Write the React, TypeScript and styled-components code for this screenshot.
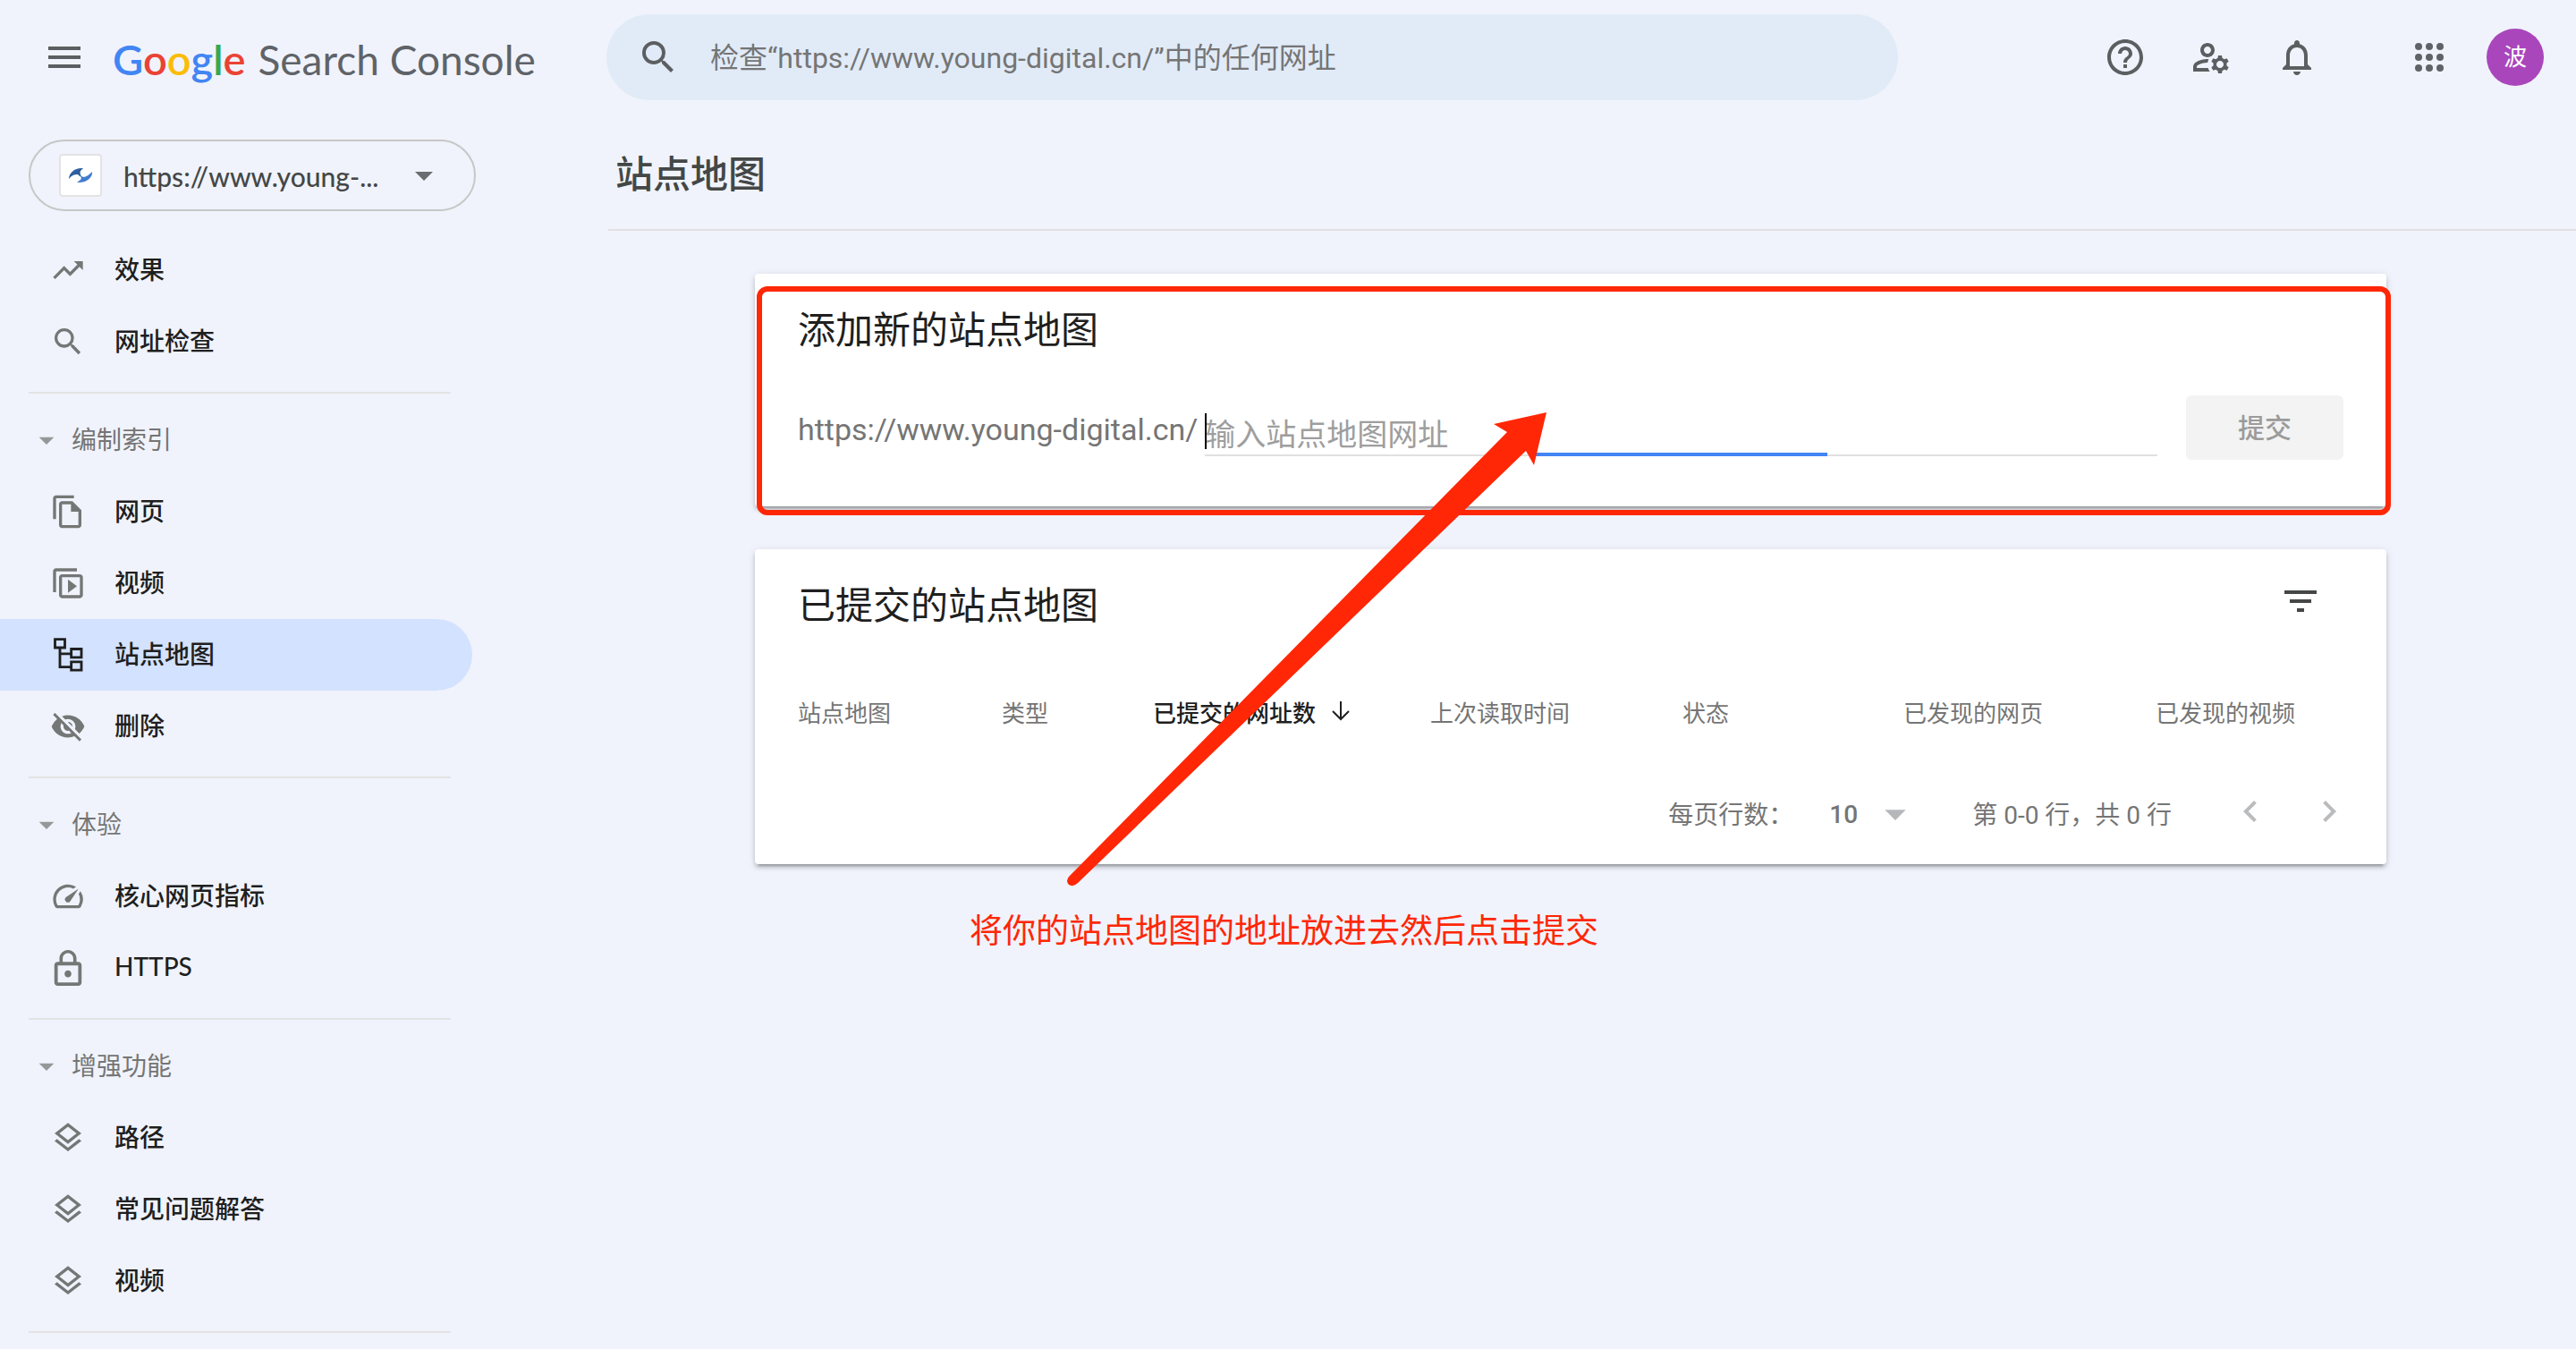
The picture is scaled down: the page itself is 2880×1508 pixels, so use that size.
import React from "react";
import styled, { createGlobalStyle, css } from "styled-components";
import {
  MdTrendingUp,
  MdSearch,
  MdOutlineFileCopy,
  MdSpeed,
  MdLockOutline,
  MdOutlineLayers,
  MdHelpOutline,
  MdOutlineManageAccounts,
  MdNotificationsNone,
  MdFilterList,
  MdArrowDropDown,
  MdChevronLeft,
  MdChevronRight,
  MdMenu,
  MdVisibilityOff,
} from "react-icons/md";

const annotationRed = "#ff2706";
const brandFont = `Lato, "Noto Sans CJK SC", sans-serif`;

const GlobalStyle = createGlobalStyle`
  *, *::before, *::after { box-sizing: border-box; }
  body {
    margin: 0;
    background: #f0f3fb;
    color: #1f1f1f;
    font-family: Roboto, "Noto Sans CJK SC", sans-serif;
    font-size: 28px;
    overflow: hidden;
  }
  button, input, select { font: inherit; color: inherit; }
  svg { display: block; flex: none; }
`;

const Page = styled.div`
  display: grid;
  grid-template-columns: 680px 1fr;
  grid-template-rows: 128px 1fr;
  min-height: 100vh;
`;

const Brand = styled.div`
  display: flex;
  align-items: center;
  padding-left: 48px;
`;

const IconButton = styled.button`
  display: flex;
  align-items: center;
  justify-content: center;
  width: 48px;
  height: 48px;
  padding: 0;
  border: 0;
  background: none;
  color: ${(p) => p.color || "#5c5f61"};
  font-size: 48px;
  cursor: pointer;
`;

const Logo = styled.a`
  display: flex;
  align-items: baseline;
  gap: 14px;
  margin-left: 30px;
  padding-top: 4px;
  font-family: ${brandFont};
  font-size: 46px;
  line-height: 56px;
  color: #5f6368;
  text-decoration: none;
  white-space: nowrap;
`;

const Wordmark = styled.span`
  font-size: 47px;
  font-weight: 600;
`;

const Letter = styled.span<{ $hue: string }>`
  color: ${(p) => p.$hue};
`;

const TopBar = styled.header`
  display: flex;
  align-items: center;
  justify-content: space-between;
  padding-right: 36px;
`;

const SearchBox = styled.label`
  display: flex;
  align-items: center;
  gap: 34px;
  width: 1444px;
  height: 96px;
  margin-left: -2px;
  padding: 0 34px;
  border-radius: 48px;
  background: #e1ebf8;
  color: #5c5f61;
  font-size: 48px;
`;

const SearchInput = styled.input`
  flex: 1;
  min-width: 0;
  padding: 2px 0 0;
  border: 0;
  outline: 0;
  background: none;
  font-size: 32px;
  line-height: 48px;
  &::placeholder { color: #757575; opacity: 1; }
`;

const Actions = styled.div`
  display: flex;
  align-items: center;
  gap: 48px;
`;

const AccountArea = styled.div`
  display: flex;
  align-items: center;
  gap: 40px;
  margin-left: 52px;
`;

const Avatar = styled.button`
  width: 64px;
  height: 64px;
  padding: 0;
  border: 0;
  border-radius: 50%;
  background: #a946bc;
  color: #fff;
  font-size: 26px;
  line-height: 64px;
  text-align: center;
`;

const Sidebar = styled.nav`
  padding-top: 28px;
`;

const PropertyPicker = styled.button`
  display: flex;
  align-items: center;
  width: 500px;
  height: 80px;
  margin: 0 0 26px 32px;
  padding: 0 32px;
  border: 2px solid #c7c7c7;
  border-radius: 40px;
  background: none;
  color: #444746;
  font-family: ${brandFont};
  font-size: 30px;
  font-weight: 500;
`;

const Favicon = styled.span`
  display: flex;
  align-items: center;
  justify-content: center;
  width: 48px;
  height: 48px;
  border: 2px solid #e3e3e3;
  border-radius: 4px;
  background: #fff;
`;

const PropertyName = styled.span`
  flex: 1;
  margin-left: 24px;
  padding-top: 2px;
  text-align: left;
`;

const PropertyCaret = styled.span`
  display: flex;
  color: #6b6e70;
  font-size: 48px;
`;

const NavGroup = styled.div`
  & + & { padding-top: 12px; }
`;

const NavRule = styled.hr`
  width: 472px;
  height: 2px;
  margin: 16px 0 0 32px;
  border: 0;
  background: #e3e3e5;
`;

const GroupToggle = styled.button`
  display: flex;
  align-items: center;
  gap: 8px;
  width: 528px;
  height: 80px;
  padding: 0 0 0 32px;
  border: 0;
  background: none;
  color: #757575;
  font-size: 28px;
  svg { font-size: 40px; color: #959799; }
`;

const NavItem = styled.a<{ $active?: boolean }>`
  display: flex;
  align-items: center;
  gap: 32px;
  width: 528px;
  height: 80px;
  padding-left: 56px;
  border-radius: 0 40px 40px 0;
  color: #1f1f1f;
  font-family: ${brandFont};
  font-size: 28px;
  font-weight: 500;
  text-decoration: none;
  svg { font-size: 40px; color: #747775; }
  ${(p) =>
    p.$active &&
    css`
      background: #d3e2fe;
      svg { color: #1f1f1f; }
    `}
`;

const NavText = styled.span`
  padding-bottom: 4px;
`;

const Main = styled.main`
  min-width: 0;
`;

const PageTitle = styled.h1`
  height: 130px;
  margin: 0;
  padding: 38px 8px 0;
  border-bottom: 2px solid #e1e1e3;
  color: #444746;
  font-size: 42px;
  font-weight: 500;
  line-height: 60px;
`;

const Content = styled.div`
  position: relative;
  display: flex;
  flex-direction: column;
  gap: 48px;
  margin: 48px 212px 0 164px;
`;

const Card = styled.section`
  position: relative;
  padding: 34px 48px 0;
  border-radius: 4px;
  background: #fff;
  box-shadow: 0 6px 2px -4px rgba(0, 0, 0, 0.2), 0 4px 4px rgba(0, 0, 0, 0.14),
    0 2px 10px rgba(0, 0, 0, 0.12);
`;

const CardHead = styled.div`
  display: flex;
  align-items: flex-start;
  justify-content: space-between;
  padding-right: 24px;
`;

const CardTitle = styled.h2`
  margin: 0;
  font-size: 42px;
  font-weight: 400;
  line-height: 60px;
  color: #1f1f1f;
`;

const AddForm = styled.form`
  display: flex;
  align-items: center;
  margin-top: 42px;
  padding-bottom: 52px;
`;

const SitePrefix = styled.label`
  margin-right: 8px;
  padding-top: 4px;
  color: #757575;
  font-size: 34px;
  line-height: 48px;
`;

const Field = styled.div`
  position: relative;
  flex: 1;
  margin-right: 32px;
  border-bottom: 2px solid #e0e0e0;
  &::after {
    content: "";
    position: absolute;
    bottom: -2px;
    left: 50%;
    width: 326px;
    height: 4px;
    margin-left: -163px;
    background: #4285f4;
  }
`;

const FieldInput = styled.input`
  display: block;
  width: 100%;
  height: 62px;
  padding: 18px 0 0;
  border: 0;
  outline: 0;
  background: none;
  font-size: 34px;
  &::placeholder { color: #9e9e9e; opacity: 1; }
`;

const Caret = styled.span`
  position: absolute;
  top: 16px;
  left: 0;
  width: 2px;
  height: 40px;
  background: #000;
`;

const SubmitButton = styled.button`
  width: 176px;
  height: 72px;
  padding: 0 0 4px;
  border: 0;
  border-radius: 6px;
  background: #f3f3f3;
  color: #9b9b9b;
  font-size: 30px;
  font-weight: 500;
`;

const Highlight = styled.div`
  position: absolute;
  inset: 14px -5px -10px 2px;
  border: 6px solid ${annotationRed};
  border-radius: 12px;
  pointer-events: none;
`;

const Table = styled.table`
  width: 100%;
  margin-top: 66px;
  border-collapse: collapse;
  table-layout: fixed;
`;

const HeadCell = styled.th<{ $width: number; $sorted?: boolean }>`
  width: ${(p) => p.$width}px;
  padding: 0;
  color: ${(p) => (p.$sorted ? "#1f1f1f" : "#757575")};
  font-size: 26px;
  font-weight: ${(p) => (p.$sorted ? 500 : 400)};
  line-height: 48px;
  text-align: left;
  white-space: nowrap;
`;

const SortLabel = styled.span`
  display: flex;
  align-items: center;
  gap: 16px;
  svg { margin-bottom: 6px; }
`;

const Pager = styled.div`
  display: flex;
  align-items: center;
  justify-content: flex-end;
  height: 112px;
  margin-top: 32px;
  color: #757575;
  font-size: 28px;
`;

const PageSize = styled.div`
  display: flex;
  align-items: center;
  position: relative;
  margin: 0 64px 0 40px;
  svg { position: absolute; right: -6px; font-size: 56px; color: #b5b7ba; pointer-events: none; }
`;

const SizeSelect = styled.select`
  width: 96px;
  padding: 0;
  border: 0;
  background: none;
  appearance: none;
  font-weight: 500;
`;

const PagerText = styled.span`
  padding-bottom: 2px;
`;

const PagerButtons = styled.div`
  display: flex;
  gap: 40px;
  margin: 0 -8px 6px 64px;
`;

const ArrowMark = styled.svg`
  position: absolute;
  top: 150px;
  left: 340px;
  pointer-events: none;
`;

const Note = styled.p`
  margin: -2px 0 0 240px;
  color: ${annotationRed};
  font-size: 37px;
  line-height: 60px;
`;

const Icon = ({ size = "1em", children }: { size?: string | number; children: React.ReactNode }) => (
  <svg viewBox="0 0 24 24" width={size} height={size} fill="currentColor" aria-hidden="true">
    {children}
  </svg>
);

const VideoIcon = () => (
  <Icon>
    <path d="M4 2h14v2H4v14H2V4c0-1.100.9-2 2-2z" />
    <path d="M20 6H8c-1.100 0-2 .9-2 2v12c0 1.100.9 2 2 2h12c1.100 0 2-.9 2-2V8c0-1.100-.9-2-2-2zm0 14H8V8h12v12z" />
    <path d="M12 9.500v9l6-4.500z" />
  </Icon>
);

const SitemapIcon = () => (
  <Icon>
    <g fill="none" stroke="currentColor" strokeWidth="1.700">
      <path d="M3.300 1.600h6.600v5.600H3.300zM14.200 8.100h6.800v5.600h-6.800zM14.200 16.700h6.800v5.600h-6.800z" />
      <path d="M6.600 7.200v13h7.600M6.600 11.300h7.600" />
    </g>
  </Icon>
);

const AppsIcon = () => (
  <Icon size={48}>
    {[6, 12, 18].map((y) => [6, 12, 18].map((x) => <circle key={`${x}-${y}`} cx={x} cy={y} r="2" />))}
  </Icon>
);

const SwirlIcon = () => (
  <svg viewBox="0 0 26 18" width="26" height="18" aria-hidden="true">
    <path d="M0 13C0 6 7 0 16 1l-3 3c-1 2 0 4 1 7-2-1-3-2-4-3-4 0-7 1-10 5z" fill="#2f5f9e" />
    <path d="M26 5c1 6-6 13-17 12l4-3c1-1 1-3 0-5 1 1 3 2 4 2 4-1 6-3 9-6z" fill="#3f7bd0" />
  </svg>
);

const groups = [
  { title: "", items: [["效果", <MdTrendingUp />], ["网址检查", <MdSearch />]] },
  {
    title: "编制索引",
    items: [
      ["网页", <MdOutlineFileCopy />],
      ["视频", <VideoIcon />],
      ["站点地图", <SitemapIcon />],
      ["删除", <MdVisibilityOff />],
    ],
  },
  {
    title: "体验",
    items: [
      ["核心网页指标", <MdSpeed />],
      ["HTTPS", <MdLockOutline viewBox="1.500 1 21 21" />],
    ],
  },
  {
    title: "增强功能",
    items: [
      ["路径", <MdOutlineLayers />],
      ["常见问题解答", <MdOutlineLayers />],
      ["视频", <MdOutlineLayers />],
    ],
  },
] as { title: string; items: [string, React.ReactNode][] }[];

const columns = [
  { name: "站点地图", width: 228 },
  { name: "类型", width: 169 },
  { name: "已提交的网址数", width: 310, sorted: true },
  { name: "上次读取时间", width: 282 },
  { name: "状态", width: 247 },
  { name: "已发现的网页", width: 282 },
  { name: "已发现的视频", width: 210 },
];

const wordmark = [
  ["G", "#4285f4"],
  ["o", "#ea4335"],
  ["o", "#fbbc05"],
  ["g", "#4285f4"],
  ["l", "#34a853"],
  ["e", "#ea4335"],
];

export default function App() {
  return (
    <>
      <GlobalStyle />
      <Page>
        <Brand>
          <IconButton aria-label="主菜单">
            <MdMenu />
          </IconButton>
          <Logo href="#">
            <Wordmark>
              {wordmark.map(([letter, hue], i) => (
                <Letter key={i} $hue={hue}>
                  {letter}
                </Letter>
              ))}
            </Wordmark>
            Search Console
          </Logo>
        </Brand>

        <TopBar>
          <SearchBox>
            <MdSearch />
            <SearchInput
              aria-label="网址检查"
              placeholder="检查“https://www.young-digital.cn/”中的任何网址"
            />
          </SearchBox>
          <Actions>
            <IconButton aria-label="帮助">
              <MdHelpOutline />
            </IconButton>
            <IconButton aria-label="用户设置">
              <MdOutlineManageAccounts />
            </IconButton>
            <IconButton aria-label="通知">
              <MdNotificationsNone />
            </IconButton>
            <AccountArea>
              <IconButton aria-label="应用" color="#5f6368">
                <AppsIcon />
              </IconButton>
              <Avatar>波</Avatar>
            </AccountArea>
          </Actions>
        </TopBar>

        <Sidebar>
          <PropertyPicker>
            <Favicon>
              <SwirlIcon />
            </Favicon>
            <PropertyName>https://www.young-...</PropertyName>
            <PropertyCaret>
              <MdArrowDropDown />
            </PropertyCaret>
          </PropertyPicker>
          {groups.map((group) => (
            <NavGroup key={group.title}>
              {group.title && (
                <GroupToggle>
                  <MdArrowDropDown />
                  <NavText>{group.title}</NavText>
                </GroupToggle>
              )}
              {group.items.map(([label, icon]) => (
                <NavItem key={label} href="#" $active={label === "站点地图"}>
                  {icon}
                  <NavText>{label}</NavText>
                </NavItem>
              ))}
              <NavRule />
            </NavGroup>
          ))}
        </Sidebar>

        <Main>
          <PageTitle>站点地图</PageTitle>
          <Content>
            <Card>
              <CardTitle>添加新的站点地图</CardTitle>
              <AddForm>
                <SitePrefix htmlFor="sitemap-url">https://www.young-digital.cn/</SitePrefix>
                <Field>
                  <FieldInput id="sitemap-url" placeholder="输入站点地图网址" />
                  <Caret />
                </Field>
                <SubmitButton type="button">提交</SubmitButton>
              </AddForm>
              <Highlight />
            </Card>

            <Card>
              <CardHead>
                <CardTitle>已提交的站点地图</CardTitle>
                <IconButton aria-label="过滤" color="#444746">
                  <MdFilterList />
                </IconButton>
              </CardHead>
              <Table>
                <thead>
                  <tr>
                    {columns.map((c) => (
                      <HeadCell key={c.name} $width={c.width} $sorted={c.sorted} scope="col">
                        {c.sorted ? (
                          <SortLabel>
                            {c.name}
                            <svg viewBox="0 0 24 24" width="24" height="24" fill="none" stroke="currentColor" strokeWidth="2">
                              <path d="M12 1v20M3 12l9 9 9-9" />
                            </svg>
                          </SortLabel>
                        ) : (
                          c.name
                        )}
                      </HeadCell>
                    ))}
                  </tr>
                </thead>
              </Table>
              <Pager>
                <PagerText as="label" htmlFor="page-size">
                  每页行数：
                </PagerText>
                <PageSize>
                  <SizeSelect id="page-size">
                    <option>10</option>
                  </SizeSelect>
                  <MdArrowDropDown />
                </PageSize>
                <PagerText>第 0-0 行，共 0 行</PagerText>
                <PagerButtons>
                  <IconButton aria-label="上一页" color="#b9bbbd">
                    <MdChevronLeft />
                  </IconButton>
                  <IconButton aria-label="下一页" color="#b9bbbd">
                    <MdChevronRight />
                  </IconButton>
                </PagerButtons>
              </Pager>
            </Card>

            <Note>将你的站点地图的地址放进去然后点击提交</Note>
            <ArrowMark viewBox="0 0 560 540" width="560" height="540" aria-hidden="true">
              <path
                d="M545 5L486 18L501 27L11 524Q7 529 11 533Q16 536 21 531L522 48L531 64Z"
                fill={annotationRed}
              />
            </ArrowMark>
          </Content>
        </Main>
      </Page>
    </>
  );
}
